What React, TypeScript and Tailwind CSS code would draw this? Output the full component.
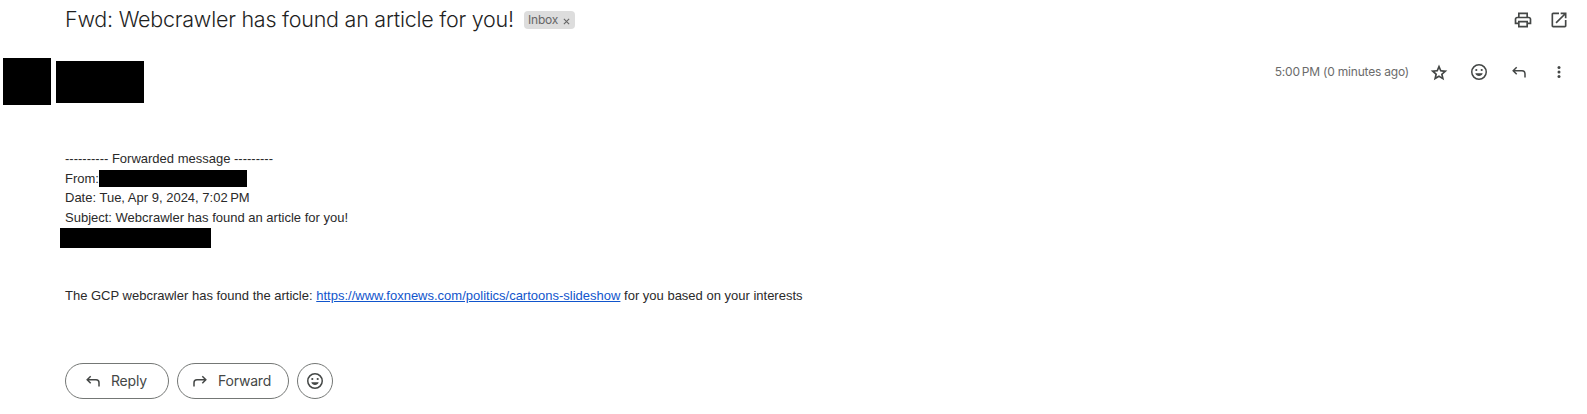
import React from "react";

type IconProps = { className?: string };

const PrintIcon = ({ className = "" }: IconProps) => (
  <svg viewBox="0 0 24 24" className={`size-5 shrink-0 fill-current ${className}`}>
    <path d="M19 8h-1V3H6v5H5c-1.66 0-3 1.34-3 3v6h4v4h12v-4h4v-6c0-1.66-1.34-3-3-3zM8 5h8v3H8V5zm8 12v2H8v-4h8v2zm2-2v-2H6v2H4v-4c0-.55.45-1 1-1h14c.55 0 1 .45 1 1v4h-2z" />
  </svg>
);

const OpenIcon = ({ className = "" }: IconProps) => (
  <svg viewBox="0 0 24 24" className={`size-5 shrink-0 fill-current ${className}`}>
    <path d="M19 19H5V5h7V3H5c-1.11 0-2 .9-2 2v14c0 1.1.89 2 2 2h14c1.1 0 2-.9 2-2v-7h-2v7zM14 3v2h3.59l-9.83 9.83 1.41 1.41L19 6.41V10h2V3h-7z" />
  </svg>
);

const StarIcon = ({ className = "" }: IconProps) => (
  <svg viewBox="0 0 24 24" className={`size-5 shrink-0 fill-current ${className}`}>
    <path d="M8.850 17.825l3.150-1.900 3.150 1.925-.825-3.600 2.775-2.400-3.650-.325-1.450-3.400-1.450 3.375-3.650.325 2.775 2.425zM5.825 22l1.625-7.025L2 10.250l7.200-.625L12 3l2.800 6.625 7.200.625-5.450 4.725L18.175 22 12 18.275z" />
  </svg>
);

const SmileIcon = ({ className = "" }: IconProps) => (
  <svg viewBox="0 0 20 20" className={`size-5 shrink-0 ${className}`}>
    <circle cx="10" cy="10" r="7.25" fill="none" stroke="currentColor" strokeWidth="1.5" />
    <circle cx="7.3" cy="8" r="1.1" fill="currentColor" />
    <circle cx="12.7" cy="8" r="1.1" fill="currentColor" />
    <path fill="currentColor" d="M6.300 11.300h7.400c-.5 1.700-2 2.700-3.700 2.700s-3.200-1-3.700-2.700z" />
  </svg>
);

const ReplyIcon = ({ className = "" }: IconProps) => (
  <svg viewBox="0 0 20 20" className={`size-5 shrink-0 fill-none stroke-current ${className}`}>
    <path strokeWidth="1.5" d="M7.700 5.300L4.200 8.800L7.700 12.300M4.200 8.800H13a3 3 0 0 1 3 3V15.500" />
  </svg>
);

const MoreIcon = ({ className = "" }: IconProps) => (
  <svg viewBox="0 0 20 20" className={`size-5 shrink-0 fill-current ${className}`}>
    <circle cx="10" cy="5.500" r="1.500" />
    <circle cx="10" cy="10" r="1.500" />
    <circle cx="10" cy="14.500" r="1.500" />
  </svg>
);

export default function App() {
  return (
    <main className="h-[414px] w-full overflow-hidden bg-white font-['Inter',sans-serif] text-[#444746]">
      <header className="flex h-10 items-center pr-[18px] pl-[65px]">
        <h1 className="w-[448px] pb-0.5 text-[21.500px] leading-7 font-light tracking-[-0.240px] whitespace-nowrap text-[#1f1f1f]">
          Fwd: Webcrawler has found an article for you!
        </h1>
        <span className="ml-[11px] flex h-[18px] w-[51px] items-center justify-between rounded-[4px] bg-[#ddd] pr-[5px] pl-1 text-xs tracking-[-0.2px] text-[#666]">
          <span>Inbox</span>
          <svg viewBox="0 0 8 8" className="mt-0.5 size-[7px] fill-none stroke-current">
            <path strokeWidth="1.300" d="M1 1l6 6M7 1L1 7" />
          </svg>
        </span>
        <div className="ml-auto flex gap-4">
          <PrintIcon />
          <OpenIcon />
        </div>
      </header>

      <section className="flex h-[65px] pt-[18px] pr-[18px] pl-[3px]">
        <div className="h-[47px] w-12 bg-black" />
        <div className="mt-[3px] ml-[5px] h-[42px] w-[88px] bg-black" />
        <div className="mt-1 ml-auto flex h-5 items-center gap-5">
          <span className="text-xs tracking-[-0.2px] whitespace-nowrap text-[#6b6b6b]">5:00{"\u202f"}PM (0 minutes ago)</span>
          <StarIcon />
          <SmileIcon />
          <ReplyIcon />
          <MoreIcon />
        </div>
      </section>

      <article className="mt-[44px] pl-[65px] font-['Liberation_Sans',Arial,sans-serif] text-[13px] leading-[19.500px] whitespace-nowrap text-[#2a2a2a]">
        <p>---------- Forwarded message ---------</p>
        <p className="flex items-center">
          From:
          <span className="h-[17px] w-[148px] bg-black" />
        </p>
        <p>Date: Tue, Apr 9, 2024, 7:02<span className="ml-[2.500px]">PM</span></p>
        <p>Subject: Webcrawler has found an article for you!</p>
        <div className="mt-[1px] -ml-[5px] h-5 w-[151px] bg-black" />
        <p className="mt-[38px]">
          The GCP webcrawler has found the article:{" "}
          <a href="#" className="text-[#1155cc] underline">
            https://www.foxnews.com/politics/cartoons-slideshow
          </a>{" "}
          for you based on your interests
        </p>
      </article>

      <footer className="mt-[57px] flex gap-2 pl-[65px] text-sm">
        <button className="flex h-9 w-[104px] items-center rounded-full border border-[#747775] pl-[17px]">
          <ReplyIcon />
          <span className="ml-2 tracking-[-0.2px]">Reply</span>
        </button>
        <button className="flex h-9 w-[112px] items-center rounded-full border border-[#747775] pl-3">
          <ReplyIcon className="-scale-x-100" />
          <span className="ml-2 tracking-[-0.2px]">Forward</span>
        </button>
        <button className="flex size-9 items-center justify-center rounded-full border border-[#747775]">
          <SmileIcon />
        </button>
      </footer>
    </main>
  );
}
